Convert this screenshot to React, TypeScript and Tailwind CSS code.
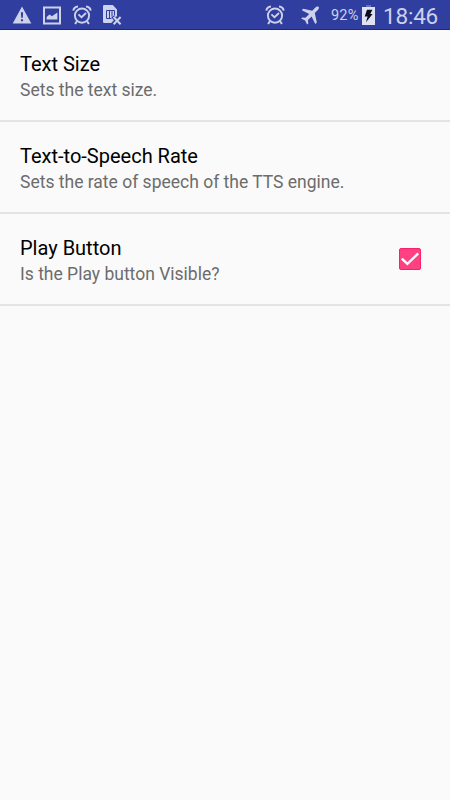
import { useState } from "react";

interface Preference {
  id: string;
  title: string;
  summary: string;
  checkable?: boolean;
}

const PREFERENCES: Preference[] = [
  { id: "text_size", title: "Text Size", summary: "Sets the text size." },
  { id: "tts_rate", title: "Text-to-Speech Rate", summary: "Sets the rate of speech of the TTS engine." },
  { id: "play_button", title: "Play Button", summary: "Is the Play button Visible?", checkable: true },
];

function WarningIcon() {
  return (
    <svg width="20" height="18" viewBox="0 0 20 18">
      <path fill="currentColor" fillRule="evenodd" d="M10 .5 19.3 17.5H.7ZM8.9 6.2l.3 5.6h1.6l.3-5.6ZM9 13.2v2.1h2v-2.1Z" />
    </svg>
  );
}

function PictureIcon() {
  return (
    <svg width="18" height="19" viewBox="0 0 18 19">
      <path fill="currentColor" fillRule="evenodd" d="M0 .5h18v18H0ZM2 2.5v14h14v-14Z" />
      <path fill="currentColor" d="M3.6 13.5V11l3-2.6 2.3 1.9 5.5-3.9v7.1Z" />
    </svg>
  );
}

function AlarmIcon() {
  return (
    <svg width="20" height="20" viewBox="0 0 20 20" fill="none" stroke="currentColor">
      <circle cx="10" cy="10.6" r="7.1" strokeWidth="1.9" />
      <path d="M6.4 9.4 9.5 12.2 14 8" strokeWidth="1.8" />
      <path d="M1.3 5.6C1.6 3.6 3.6 1.7 6 1.5M18.7 5.6C18.4 3.6 16.4 1.7 14 1.5" strokeWidth="2" />
      <path d="M4.9 16.2 3.1 19M15.1 16.2 16.9 19" strokeWidth="2" />
    </svg>
  );
}

function NoSimIcon() {
  return (
    <svg width="19" height="20" viewBox="0 0 19 20">
      <path fill="currentColor" d="M1.2 0H9.8L14 4.4V11L12.8 12.2 10.8 10.4 8.4 12.6 10.8 15.2 8.3 18H1.2Q0 18 0 16.8V1.2Q0 0 1.2 0Z" />
      <path fill="none" stroke="#303f9f" strokeWidth="1" d="M8.5 13.5H3.5V5.5H11.5V10.5M6.5 5.5V13.5M9 5.5V11.5" />
      <path stroke="currentColor" strokeWidth="2" d="M10.6 12 17.6 19.2M17.6 12 10.6 19.2" />
    </svg>
  );
}

function AirplaneIcon() {
  return (
    <svg width="19" height="19" viewBox="0 0 19 19">
      <path
        fill="currentColor"
        d="M17.6.7C16.6 0 15.3.6 14.4 1.5L11.2 4.7 2.2 2.7.8 4.2 8.2 8.1 4.5 11.8 1.3 11.4.1 12.5 4.1 14.6 6.1 18.5 7.3 17.4 6.9 14.1 10.6 10.4 14.3 17.9 15.8 16.4 13.8 7.1 16.8 4C17.7 3.1 18.4 1.5 17.6.7Z"
      />
    </svg>
  );
}

function BatteryIcon() {
  return (
    <svg width="13" height="20" viewBox="0 0 13 20">
      <path fill="#6671b9" d="M4 0H9V2H4Z" />
      <path fill="#dfe2f4" d="M0 2H13V20H0Z" />
      <path fill="#0b0d1c" d="M5 4.8H10.4L8.3 9H10.6L4 17.2 5.6 11.5H2.7Z" />
    </svg>
  );
}

function StatusBar() {
  return (
    <header className="flex h-[30px] items-center justify-between border-b border-[#1a2691] bg-[#303f9f] pl-3 pr-3 text-[#cdd1ea]">
      <div className="flex items-center pt-px">
        <WarningIcon />
        <span className="ml-[11px]">
          <PictureIcon />
        </span>
        <span className="ml-[11px]">
          <AlarmIcon />
        </span>
        <span className="ml-[11px]">
          <NoSimIcon />
        </span>
      </div>
      <div className="flex items-center pt-px">
        <AlarmIcon />
        <span className="ml-4">
          <AirplaneIcon />
        </span>
        <span className="ml-[11px] w-[31px] whitespace-nowrap pt-px text-[14.5px] leading-5 tracking-[0.2px]">92%</span>
        <BatteryIcon />
        <span className="ml-2 w-[55px] whitespace-nowrap pt-0.5 text-[22.5px] leading-6 tracking-[-0.2px]">18:46</span>
      </div>
    </header>
  );
}

function Checkbox({ checked, onChange }: { checked: boolean; onChange: () => void }) {
  return (
    <button
      role="checkbox"
      aria-checked={checked}
      onClick={onChange}
      className={`flex h-[22px] w-[22px] items-center justify-center rounded-[2px] border ${
        checked ? "border-[#fb1f70] bg-[#ff4081]" : "border-[#757575] bg-transparent"
      }`}
    >
      {checked && (
        <svg width="20" height="20" viewBox="0 0 20 20" fill="none" className="shrink-0">
          <path d="M1.8 9.6 7.4 14.8 18.2 4.4" stroke="#fff" strokeWidth="2.4" />
        </svg>
      )}
    </button>
  );
}

export default function App() {
  const [playVisible, setPlayVisible] = useState(true);

  return (
    <div className="min-h-screen bg-[#fafafa] font-['Roboto',sans-serif]">
      <StatusBar />
      <ul>
        {PREFERENCES.map((p) => (
          <li key={p.id} className="flex h-[92px] items-center justify-between border-b-2 border-[#e4e4e4] pl-5 pr-[29px]">
            <div className="pt-0.5">
              <div className="text-[20px] leading-[26px] text-black">{p.title}</div>
              <div className="mt-px text-[17.5px] leading-6 text-[#6c6c6c]">{p.summary}</div>
            </div>
            {p.checkable && <Checkbox checked={playVisible} onChange={() => setPlayVisible((v) => !v)} />}
          </li>
        ))}
      </ul>
    </div>
  );
}
